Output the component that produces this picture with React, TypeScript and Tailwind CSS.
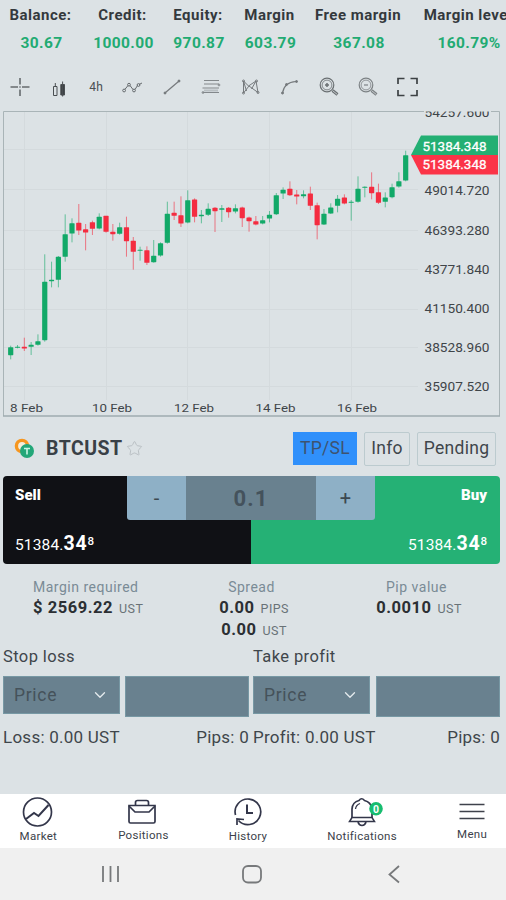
import { ChevronDown, Star } from 'lucide-react';
import React from 'react';

interface Stat {
  label: string;
  value: string;
  className: string;
}

const STATS: Stat[] = [
  { label: 'Balance:', value: '30.67', className: 'w-[83px]' },
  { label: 'Credit:', value: '1000.00', className: 'w-[81px]' },
  { label: 'Equity:', value: '970.87', className: 'w-[70px]' },
  { label: 'Margin', value: '603.79', className: 'w-[73px]' },
  { label: 'Free margin', value: '367.08', className: 'w-[104px]' },
  { label: 'Margin level', value: '160.79%', className: 'w-[116px]' },
];

// direction, open/close edges, high, low (in thirds of a pixel)
type Candle = ['g' | 'r', number, number, number, number];

const CANDLES: Candle[] = [
  ['g', 727, 750, 722, 763],
  ['g', 726, 728, 720, 730],
  ['r', 726, 730, 698, 738],
  ['g', 720, 725, 711, 750],
  ['g', 709, 719, 688, 722],
  ['g', 531, 705, 448, 710],
  ['g', 525, 528, 470, 547],
  ['g', 456, 524, 453, 547],
  ['g', 388, 455, 328, 470],
  ['g', 355, 385, 340, 412],
  ['r', 354, 376, 297, 390],
  ['r', 373, 382, 357, 436],
  ['r', 352, 371, 347, 390],
  ['g', 336, 370, 325, 373],
  ['r', 333, 380, 333, 383],
  ['r', 381, 387, 357, 407],
  ['g', 367, 386, 353, 389],
  ['r', 367, 408, 335, 455],
  ['r', 408, 440, 396, 494],
  ['g', 435, 437, 425, 467],
  ['r', 436, 473, 424, 480],
  ['g', 453, 471, 405, 473],
  ['g', 415, 451, 412, 455],
  ['g', 327, 413, 290, 416],
  ['r', 324, 332, 290, 345],
  ['r', 331, 355, 274, 366],
  ['g', 286, 352, 256, 355],
  ['r', 284, 335, 280, 352],
  ['g', 330, 333, 315, 355],
  ['g', 312, 329, 295, 333],
  ['r', 309, 318, 306, 381],
  ['g', 310, 314, 300, 351],
  ['r', 309, 321, 306, 338],
  ['g', 310, 319, 298, 325],
  ['r', 308, 339, 305, 366],
  ['r', 338, 348, 335, 380],
  ['r', 349, 358, 333, 361],
  ['g', 346, 355, 333, 358],
  ['g', 330, 340, 318, 352],
  ['g', 271, 327, 264, 330],
  ['g', 255, 265, 247, 282],
  ['r', 252, 270, 229, 273],
  ['r', 269, 274, 255, 298],
  ['g', 268, 273, 256, 280],
  ['r', 266, 302, 245, 315],
  ['r', 301, 360, 293, 403],
  ['g', 327, 358, 312, 360],
  ['g', 308, 325, 295, 327],
  ['g', 282, 302, 270, 322],
  ['r', 278, 295, 268, 298],
  ['g', 291, 293, 285, 347],
  ['g', 252, 290, 214, 293],
  ['g', 246, 248, 244, 277],
  ['r', 246, 264, 202, 283],
  ['r', 262, 293, 236, 297],
  ['g', 278, 290, 262, 307],
  ['g', 247, 276, 236, 280],
  ['g', 229, 244, 202, 248],
  ['g', 151, 226, 137, 229],
];

const PRICE_TICKS = [
  { label: '54257.600', y: 112 },
  { label: '49014.720', y: 190.5 },
  { label: '46393.280', y: 230 },
  { label: '43771.840', y: 269 },
  { label: '41150.400', y: 308.5 },
  { label: '38528.960', y: 347.5 },
  { label: '35907.520', y: 386.5 },
];

const DATE_TICKS = [
  { label: '8 Feb', x: 26.5, width: 33 },
  { label: '10 Feb', x: 112, width: 40 },
  { label: '12 Feb', x: 194, width: 40 },
  { label: '14 Feb', x: 275.5, width: 40 },
  { label: '16 Feb', x: 357, width: 40 },
];

const Chart: React.FC = () => (
  <svg viewBox="3 111 497 306" width="497" height="306" className="block">
    <defs>
      <clipPath id="plot">
        <rect x="3" y="111.5" width="497" height="305" />
      </clipPath>
    </defs>
    <g stroke="#d4dadd" strokeWidth="1">
      {[24.5, 106.5, 187.5, 269.5, 351.5].map((x) => (
        <line key={x} x1={x} x2={x} y1="112" y2="400" />
      ))}
      {[149.5, 189.5, 230.5, 269.5, 309.5, 347.5, 386.5].map((y) => (
        <line key={y} x1="4" x2="418" y1={y} y2={y} />
      ))}
    </g>
    {CANDLES.map(([dir, top, bottom, high, low], i) => {
      const x = 10.7 + i * 6.81;
      const color = dir === 'g' ? '#12a968' : '#f42c40';
      return (
        <g key={i} fill={color}>
          <rect
            x={x - 0.5}
            y={105 + high / 3}
            width="1"
            height={(low - high) / 3}
            opacity="0.6"
          />
          <rect
            x={x - 2.6}
            y={105 + top / 3 - 0.2}
            width="5.2"
            height={(bottom - top) / 3 + 0.4}
            rx="0.6"
          />
        </g>
      );
    })}
    <path d="M3.5 416V111.5H499.5V416" fill="none" stroke="#a9b4b7" />
    <path d="M3 416H500" fill="none" stroke="#9fabaf" strokeWidth="1.5" />
    <rect x="424" y="111" width="67" height="2" fill="#dce2e5" />
    <g fontSize="12.5" fill="#3f4549" clipPath="url(#plot)">
      {PRICE_TICKS.map((tick) => (
        <text
          key={tick.label}
          x="424.5"
          y={tick.y + 4.5}
          textLength="65"
          lengthAdjust="spacingAndGlyphs"
        >
          {tick.label}
        </text>
      ))}
      {DATE_TICKS.map((tick) => (
        <text
          key={tick.label}
          x={tick.x - tick.width / 2}
          y="412"
          textLength={tick.width}
          lengthAdjust="spacingAndGlyphs"
          fontSize="11.5"
        >
          {tick.label}
        </text>
      ))}
    </g>
    <path d="M411 155L421 135.500H498V155Z" fill="#23af73" />
    <path d="M411 155H498V174.500H421Z" fill="#fb3448" />
    <g fontSize="12.5" fill="#fff" stroke="#fff" strokeWidth="0.3">
      <text x="422.500" y="151" textLength="64" lengthAdjust="spacingAndGlyphs">
        51384.348
      </text>
      <text x="422.500" y="168.500" textLength="64" lengthAdjust="spacingAndGlyphs">
        51384.348
      </text>
    </g>
  </svg>
);

const TOOLS: React.ReactNode[] = [
  <g stroke="#666b6e" strokeWidth="1.6">
    <path d="M2.500 12H10M14 12H21.500M12 3V9.500M12 14.500V21" />
    <path d="M12 11V13" strokeWidth="1" />
  </g>,
  <g stroke="#4a4f52" strokeWidth="1">
    <path d="M6.500 11.500H10V20.500H6.500ZM8.300 8V11.500" />
    <path d="M13.800 9.500H17.500V20H13.800ZM15.600 6.500V21.500" fill="#3c4144" />
  </g>,
  null,
  <g stroke="#666b6e" transform="translate(-3.5 0)">
    <path d="M4.300 14.500L7.500 10.500M9.500 10.500L12.500 14.500M14.500 14.500L17 10.500M18.500 9.500L21.500 8" />
    <circle cx="3.600" cy="15.500" r="1.400" />
    <circle cx="8.500" cy="9.700" r="1.400" />
    <circle cx="13.500" cy="15.500" r="1.400" />
    <circle cx="18" cy="10" r="1.400" />
  </g>,
  <g stroke="#75797c" transform="translate(-3 0)">
    <path d="M5.500 17.500L18.500 6.500" strokeWidth="1.200" />
    <circle cx="5" cy="18" r="1" fill="#666b6e" />
    <circle cx="19" cy="6" r="1" fill="#666b6e" />
  </g>,
  <g stroke="#83888b" transform="translate(-3 0)">
    <path d="M5 5.500H20M5 9H20M3.500 13H20M3.500 17.500H20" strokeWidth="1.200" />
    <path d="M5 15.500H19" stroke="#b9bfc2" strokeWidth="2" />
    <circle cx="20" cy="10" r="0.900" />
    <circle cx="4" cy="17.500" r="0.900" />
  </g>,
  <g stroke="#75797c" transform="translate(-1.5 0)">
    <path d="M5 18V6L10 11L17.500 6L19.500 17.500L10.500 11L5 18M5 6L8 16M17.500 6L13 14" />
    <circle cx="5" cy="18" r="1" />
    <circle cx="5" cy="6" r="1" />
    <circle cx="18" cy="6" r="1" />
    <circle cx="19.500" cy="17.500" r="1" />
  </g>,
  <g stroke="#75797c" transform="translate(-1.5 0)">
    <path d="M5 18C6 11.500 10 7 18.500 6.500" strokeWidth="1.200" />
    <circle cx="5" cy="18" r="1" fill="#75797c" />
    <circle cx="9" cy="9.500" r="1" fill="#75797c" />
    <circle cx="19" cy="6.500" r="1" fill="#75797c" />
  </g>,
  <g stroke="#6b7073" transform="translate(-1 0)">
    <circle cx="10" cy="10" r="6.800" strokeWidth="1.200" />
    <circle cx="10" cy="10" r="4.900" strokeWidth="0.800" />
    <path d="M10 8V12M8 10H12" strokeWidth="1.500" />
    <path d="M15.500 15.500L20.500 19.500" strokeWidth="3" />
    <path d="M16 16L20 19.200" stroke="#c3c8cb" strokeWidth="1" />
  </g>,
  <g stroke="#7d8285" transform="translate(-1 0)">
    <circle cx="10" cy="10" r="6.800" strokeWidth="1.200" />
    <circle cx="10" cy="10" r="4.900" strokeWidth="0.800" />
    <path d="M8 10H12" strokeWidth="1.200" />
    <path d="M15.500 15.500L20.500 19.500" strokeWidth="3" />
    <path d="M16 16L20 19.200" stroke="#c3c8cb" strokeWidth="1" />
  </g>,
  <path
    d="M3 9V3.500H9.500M15.500 3.500H22V9M22 15V20.500H15.500M9.500 20.500H3V15"
    stroke="#3c4144"
    strokeWidth="1.700"
  />,
];

const Toolbar: React.FC = () => (
  <div className="flex h-[53px] items-center pt-[4px] pl-[1px]">
    {TOOLS.map((tool, i) => (
      <div key={i} className="flex w-[38.7px] shrink-0 justify-center">
        {tool ? (
          <svg viewBox="0 0 24 24" width="24" height="24" fill="none" className="overflow-visible">
            {tool}
          </svg>
        ) : (
          <span className="-ml-[3px] text-[12px] tracking-[0.2px] text-[#4a4f52]">4h</span>
        )}
      </div>
    ))}
  </div>
);

const Price: React.FC = () => (
  <div className="flex items-baseline text-[15.5px] leading-6 text-white">
    <span className="tracking-[0.15px]">51384.</span>
    <span className="text-[19.5px] font-bold tracking-[0.8px]">34</span>
    <span className="relative -top-[5px] text-[11.5px] font-medium">8</span>
  </div>
);

const TradePanel: React.FC = () => (
  <div className="relative ml-[3px] flex h-[88px] w-[497px] overflow-hidden rounded-[4px]">
    <div className="flex w-[248px] flex-col justify-between bg-[#101115] pt-[7px] pb-[6px] pl-3">
      <span className="text-[15px] leading-6 font-black text-white">Sell</span>
      <Price />
    </div>
    <div className="flex w-[249px] flex-col items-end justify-between bg-[#25b175] pt-[7px] pr-[13px] pb-[6px]">
      <span className="text-[15px] leading-6 font-black text-white">Buy</span>
      <Price />
    </div>
    <div className="absolute top-0 left-[124px] flex h-[44px] w-[248px] overflow-hidden rounded-b-[3px] text-[#3c4850]">
      <button className="w-[59px] bg-[#8eb0c6] text-xl">-</button>
      <div className="flex flex-1 items-center justify-center bg-[#69818f] text-[22px] font-bold tracking-[1.1px] text-[#44525c]">
        0.1
      </div>
      <button className="w-[59px] bg-[#8eb0c6] text-xl">+</button>
    </div>
  </div>
);

const Amount: React.FC<{ value: string; unit: string }> = ({ value, unit }) => (
  <div className="flex items-baseline leading-[21px]">
    <span className="text-[16.5px] font-bold tracking-[0.55px] text-[#2b2f33]">{value}</span>
    <span className="ml-[6px] text-[12.5px] tracking-[0.4px] text-[#697277]">{unit}</span>
  </div>
);

const LimitColumn: React.FC<{ title: string; result: string; className: string }> = ({
  title,
  result,
  className,
}) => (
  <div className={className}>
    <div className="h-[32px] pt-[1px] text-[16.5px] leading-6 tracking-[0.4px]">{title}</div>
    <div className="flex h-[42px] justify-between">
      <div className="flex h-[38px] w-[117px] items-center justify-between border border-[#7798a4] bg-[#69818f] pr-[10px] pl-[10px]">
        <span className="text-[17.5px] tracking-[0.7px] text-[#45525a]">Price</span>
        <ChevronDown className="h-[18px] w-[18px] text-[#e3e9ec]" strokeWidth={1.8} />
      </div>
      <div className="h-[41px] w-[124px] border border-[#7798a4] bg-[#69818f]" />
    </div>
    <div className="flex h-[39px] items-center justify-between text-[17px] tracking-[0.25px]">
      <span>{result}</span>
      <span>Pips: 0</span>
    </div>
  </div>
);

const NavItem: React.FC<{ label: string; className: string; children: React.ReactNode }> = ({
  label,
  className,
  children,
}) => (
  <div className={`flex flex-col items-center ${className}`}>
    <svg
      viewBox="0 0 32 32"
      width="32"
      height="32"
      fill="none"
      stroke="#33364a"
      strokeWidth="1.7"
      className="overflow-visible"
    >
      {children}
    </svg>
    <span className="text-[11.5px] leading-4 tracking-[0.3px] whitespace-nowrap text-[#3c3f4a]">
      {label}
    </span>
  </div>
);

const BottomNav: React.FC = () => (
  <nav className="flex h-[54px] items-start bg-white pt-[2px]">
    <NavItem label="Market" className="w-[77px]">
      <circle cx="15.500" cy="16" r="14" />
      <path d="M4 23L12 17L16.500 20L26.500 9" strokeWidth="2" />
    </NavItem>
    <NavItem label="Positions" className="-mt-[1px] w-[134px]">
      <path d="M2 10.500H28V26.500Q28 28 26.500 28H3.500Q2 28 2 26.500Z" />
      <path d="M8.500 10V7.500Q8.500 5.500 10.500 5.500H19.500Q21.500 5.500 21.500 7.500V10" />
      <path d="M2 11L8 17H22L28 11" />
    </NavItem>
    <NavItem label="History" className="w-[76px]">
      <path d="M3.500 19A12.800 12.800 0 1 1 6.500 24.500" />
      <path d="M12 23.500L5 23L5 29" />
      <path d="M15 8.500V17H21" strokeWidth="2" />
    </NavItem>
    <NavItem label="Notifications" className="w-[153px]">
      <path d="M6 22V13Q6.500 6 13 4.500Q15.500 1 18.500 4.500Q25 6 26 13V22" />
      <path d="M3.500 25.500L6 21.500H26L28.500 25.500Z" strokeWidth="1.500" />
      <path d="M12 26Q13 29.500 16 29.500Q19 29.500 20 26" />
      <path d="M9.500 13Q10 9 14 7.500" strokeWidth="1.300" />
      <circle cx="30" cy="12.800" r="6.800" fill="#17bd70" stroke="none" />
      <text
        x="30"
        y="16.500"
        textAnchor="middle"
        fontSize="10.500"
        fontWeight="700"
        fill="#fff"
        stroke="none"
      >
        0
      </text>
    </NavItem>
    <NavItem label="Menu" className="-mt-[2px] w-[68px]">
      <path d="M3.500 10.500H28.500M3.500 17.500H28.500M3.500 24.500H28.500" stroke="#3f424b" />
    </NavItem>
  </nav>
);

const SystemBar: React.FC = () => (
  <div className="h-[52px] bg-[#f0f0f0]">
    <svg
      viewBox="0 0 506 52"
      width="506"
      height="52"
      fill="none"
      stroke="#77797b"
      strokeWidth="1.800"
    >
      <path d="M103 18V34M110.500 18V34M118 18V34" />
      <rect x="243" y="18" width="18" height="16.500" rx="5" />
      <path d="M399 18L389.500 26.500L399 34.500" />
    </svg>
  </div>
);

const App: React.FC = () => {
  return (
    <div className="flex h-[900px] w-[506px] flex-col overflow-hidden bg-[#dce2e5] font-[Roboto,sans-serif] text-[#3f464b]">
      <header className="flex h-[58px]">
        {STATS.map((stat) => (
          <div
            key={stat.label}
            className={`flex shrink-0 flex-col items-center whitespace-nowrap ${stat.className}`}
          >
            <span className="mt-[5px] -ml-[2px] text-[15px] leading-[21px] font-bold tracking-[0.5px] text-[#34393d]">
              {stat.label}
            </span>
            <span className="mt-[6px] text-[15.5px] leading-[22px] font-bold tracking-[0.4px] text-[#22ab72]">
              {stat.value}
            </span>
          </div>
        ))}
      </header>
      <Toolbar />
      <div className="ml-[3px]">
        <Chart />
      </div>

      <div className="flex h-[59px] items-center pt-[4px] pr-[10px] pl-[14px]">
        <svg viewBox="0 0 22 22" width="22" height="22">
          <circle cx="8" cy="8" r="5.600" fill="#f5edda" stroke="#f6961f" strokeWidth="3.400" />
          <circle cx="13" cy="13" r="7" fill="#23a779" />
          <path d="M10 10.500H16M13 10.500V16.500" stroke="#c9f5e4" strokeWidth="1.600" />
        </svg>
        <span className="ml-[10px] text-[19.5px] font-bold tracking-[0.5px] text-[#394046]">
          BTCUST
        </span>
        <Star className="ml-[3px] h-[17px] w-[17px] text-[#b9bfc3]" strokeWidth={1.400} />
        <div className="ml-auto flex gap-[7px] text-[17.5px] tracking-[0.3px]">
          <button className="h-[33px] w-[64px] bg-[#3090fb] text-[#3e5370]">TP/SL</button>
          <button className="h-[34px] w-[46px] rounded-[2px] border border-[#bccbcf]">Info</button>
          <button className="h-[34px] w-[79px] rounded-[2px] border border-[#bccbcf]">
            Pending
          </button>
        </div>
      </div>

      <TradePanel />

      <div className="flex h-[80px] pt-[13px] pl-[33px] text-[14px] tracking-[0.5px]">
        <div className="w-[166px]">
          <div className="leading-5 text-[#7a8b96]">Margin required</div>
          <Amount value="$ 2569.22" unit="UST" />
        </div>
        <div className="flex w-[110px] flex-col items-center">
          <div className="-ml-[5px] leading-5 text-[#7a8b96]">Spread</div>
          <Amount value="0.00" unit="PIPS" />
          <Amount value="0.00" unit="UST" />
        </div>
        <div className="ml-[55px] flex w-[110px] flex-col items-center">
          <div className="-ml-[5px] leading-5 text-[#7a8b96]">Pip value</div>
          <Amount value="0.0010" unit="UST" />
        </div>
      </div>

      <div className="flex flex-1 pl-[3px]">
        <LimitColumn title="Stop loss" result="Loss: 0.00 UST" className="w-[246px]" />
        <LimitColumn title="Take profit" result="Profit: 0.00 UST" className="ml-[4px] w-[247px]" />
      </div>

      <BottomNav />
      <SystemBar />
    </div>
  );
};

export default App;
